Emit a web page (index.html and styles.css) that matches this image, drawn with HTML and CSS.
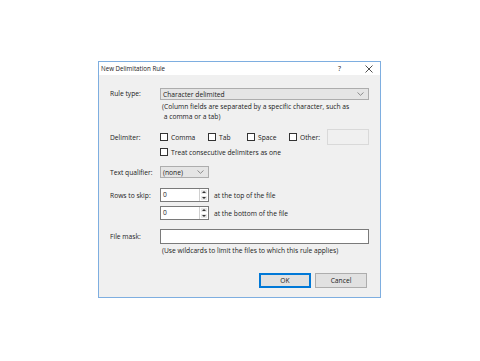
FILE: index.html
```html
<!DOCTYPE html>
<html lang="en">
  <head>
    <meta charset="UTF-8" />
    <title>New Delimitation Rule</title>
    <link rel="stylesheet" href="styles.css">
  </head>
  <body>
    <div class="dialog">
      <div class="titlebar">
        <span class="title">New Delimitation Rule</span>
        <span class="help">?</span>
        <span class="close">
          <svg width="8" height="8" viewBox="0 0 8 8"><path d="M0.5 0.5 L7.5 7.5 M7.5 0.5 L0.5 7.5" stroke="#222" stroke-width="0.8" fill="none"/></svg>
        </span>
      </div>
      <div class="content">
        <div class="row row-rule">
          <label class="label">Rule type:</label>
          <div class="field">
            <div class="combo combo-wide">
              <span>Character delimited</span>
              <svg class="chevron" width="7" height="4" viewBox="0 0 7 4"><path d="M0.5 0.5 L3.5 3.3 L6.5 0.5" stroke="#777" stroke-width="0.8" fill="none"/></svg>
            </div>
            <p class="hint">(Column fields are separated by a specific character, such as<br />&nbsp;a comma or a tab)</p>
          </div>
        </div>

        <div class="row row-delim">
          <label class="label">Delimiter:</label>
          <div class="field options">
            <span class="check opt-comma"><i class="box"></i>Comma</span>
            <span class="check opt-tab"><i class="box"></i>Tab</span>
            <span class="check opt-space"><i class="box"></i>Space</span>
            <span class="check opt-other"><i class="box"></i>Other:</span>
            <span class="textbox disabled"></span>
          </div>
        </div>

        <div class="row row-treat">
          <span class="label"></span>
          <span class="check"><i class="box"></i>Treat consecutive delimiters as one</span>
        </div>

        <div class="row row-qual">
          <label class="label">Text qualifier:</label>
          <div class="combo combo-small">
            <span>(none)</span>
            <svg class="chevron" width="7" height="4" viewBox="0 0 7 4"><path d="M0.5 0.5 L3.5 3.3 L6.5 0.5" stroke="#777" stroke-width="0.8" fill="none"/></svg>
          </div>
        </div>

        <div class="row row-skip">
          <label class="label">Rows to skip:</label>
          <div class="spin">
            <span class="spin-value">0</span>
            <span class="spin-btns">
              <i class="up"></i>
              <i class="down"></i>
            </span>
          </div>
          <span class="after">at the top of the file</span>
        </div>

        <div class="row row-skip2">
          <span class="label"></span>
          <div class="spin">
            <span class="spin-value">0</span>
            <span class="spin-btns">
              <i class="up"></i>
              <i class="down"></i>
            </span>
          </div>
          <span class="after">at the bottom of the file</span>
        </div>

        <div class="row row-mask">
          <label class="label">File mask:</label>
          <span class="textbox mask"></span>
        </div>

        <div class="row row-maskhint">
          <span class="label"></span>
          <p class="hint">(Use wildcards to limit the files to which this rule applies)</p>
        </div>

        <div class="buttons">
          <button class="btn btn-default">OK</button>
          <button class="btn">Cancel</button>
        </div>
      </div>
    </div>
  </body>
</html>
```

FILE: styles.css
```css
body {
  margin: 0;
  background: #fff;
  font-family: "Open Sans", "Noto Sans", sans-serif;
  font-size: 6.7px;
  color: #1a1a1a;
}
.dialog {
  margin: 61px 0 0 98px;
  width: 281px;
  border: 1px solid #7eaee0;
  background: #f0f0f0;
}
.titlebar {
  display: flex;
  align-items: center;
  height: 13px;
  background: #fff;
  padding-left: 2px;
  font-size: 6.2px;
}
.title {
  flex: 1;
}
.help {
  width: 27px;
  text-align: left;
  font-size: 7px;
}
.close {
  display: flex;
  width: 15px;
}
.content {
  padding: 13px 11px 9px 11px;
}
.row {
  display: flex;
  align-items: center;
}
.label {
  width: 50px;
  flex: none;
}
.row-rule {
  align-items: flex-start;
}
.row-rule .label {
  line-height: 12px;
}
.field {
  flex: 1;
}
.combo {
  display: flex;
  align-items: center;
  height: 10px;
  border: 1px solid #adadad;
  background: #e5e5e5;
  padding: 0 4px 0 2px;
}
.combo span {
  flex: 1;
}
.combo-wide {
  width: 201px;
}
.combo-small {
  width: 41px;
}
.hint {
  margin: 2px 0 0 2px;
  line-height: 10px;
}
.row-delim {
  margin-top: 7px;
  height: 16px;
}
.options {
  display: flex;
  align-items: center;
}
.check {
  display: flex;
  align-items: center;
}
.box {
  width: 6px;
  height: 6px;
  border: 1px solid #333;
  background: #fff;
  margin-right: 3px;
  flex: none;
}
.opt-comma {
  width: 48px;
}
.opt-tab {
  width: 39px;
}
.opt-space {
  width: 42px;
}
.opt-other {
  width: 38px;
}
.textbox {
  display: block;
  border: 1px solid #7a7a7a;
  background: #fff;
}
.textbox.disabled {
  width: 40px;
  height: 14px;
  border-color: #d9d9d9;
  background: #f0f0f0;
}
.row-treat {
  margin-top: 2px;
  height: 10px;
}
.row-qual {
  margin-top: 9px;
}
.row-skip {
  margin-top: 10px;
}
.row-skip2 {
  margin-top: 4px;
}
.spin {
  display: flex;
  width: 47px;
  height: 12px;
  border: 1px solid #7a7a7a;
  background: #fff;
}
.spin-value {
  flex: 1;
  padding-left: 2px;
  line-height: 12px;
}
.spin-btns {
  display: flex;
  flex-direction: column;
  width: 8px;
  border-left: 1px solid #d0d0d0;
}
.spin-btns i {
  flex: 1;
  position: relative;
  background: #e8e8e8;
  border: 1px solid #fff;
}
.spin-btns i::after {
  content: "";
  position: absolute;
  left: 1px;
  top: 1px;
  border-left: 2px solid transparent;
  border-right: 2px solid transparent;
}
.spin-btns .up::after {
  border-bottom: 2px solid #333;
}
.spin-btns .down::after {
  border-top: 2px solid #333;
}
.after {
  margin-left: 5px;
}
.row-mask {
  margin-top: 9px;
}
.mask {
  width: 207px;
  height: 13px;
}
.row-maskhint {
  margin-top: 2px;
}
.row-maskhint .hint {
  margin: 0 0 0 2px;
}
.buttons {
  display: flex;
  justify-content: flex-end;
  gap: 4px;
  margin: 17px 2px 0 0;
}
.btn {
  width: 52px;
  height: 15px;
  padding: 0;
  font-family: inherit;
  font-size: 6.7px;
  color: #1a1a1a;
  background: #e1e1e1;
  border: 1px solid #adadad;
}
.btn-default {
  border: 1px solid #0078d7;
  box-shadow: inset 0 0 0 1px #0078d7;
}
```
